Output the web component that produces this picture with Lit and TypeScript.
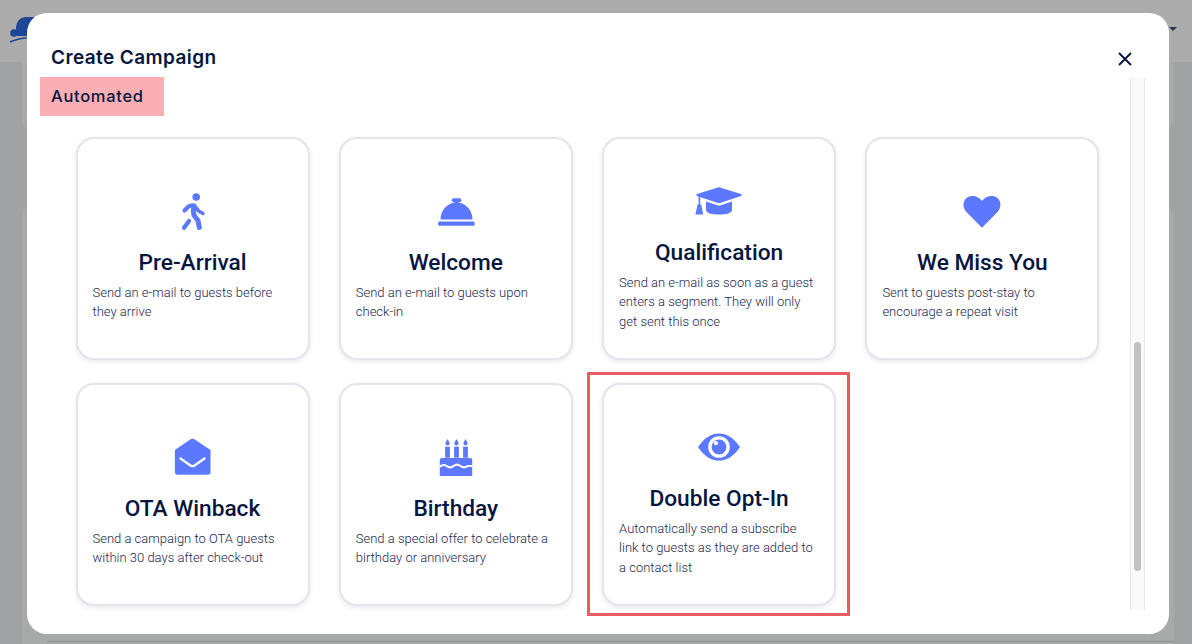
import { html, svg, LitElement, css } from "lit";
import { customElement } from "lit/decorators.js";

const ICON = "#5b78ff";

const walk = svg`<svg viewBox="2.5 -3 80 70" width="80" height="70">
  <circle cx="45.7" cy="16" r="3.8" fill="${ICON}"/>
  <g fill="none" stroke="${ICON}" stroke-linecap="round" stroke-linejoin="round">
    <path d="M34 29.5L38 25.5Q40 24 44 24.5" stroke-width="4.2"/>
    <path d="M43.5 26Q42 31 44 35L47.5 39.5L48.8 46.5" stroke-width="5"/>
    <path d="M46 27L48 30L52.5 32.5" stroke-width="3.6"/>
    <path d="M38.5 40L33.5 46.8" stroke-width="4.2"/>
  </g>
</svg>`;

const bell = svg`<svg viewBox="-4.5 -3 80 70" width="80" height="70" fill="${ICON}">
  <rect x="31.3" y="17.3" width="9.6" height="4" rx="2"/>
  <rect x="34" y="20" width="4" height="3"/>
  <path d="M20 38.6C20 29 27 21.5 36 21.5S52 29 52 38.6Z"/>
  <rect x="17.7" y="40.4" width="36.4" height="4.4" rx="1"/>
</svg>`;

const hat = svg`<svg viewBox="-1 -7 80 70" width="80" height="70" fill="${ICON}">
  <path d="M38 12.4Q39 12.2 40 12.4L61 19Q62.5 20 61 21L40 27.9Q39 28.1 38 27.9L17 21Q15.5 20 17 19Z"/>
  <path d="M26 26.6L38 30.6Q39 30.9 40 30.6L52 26.6V35C52 38 46 39.6 39 39.6C32 39.6 26 38 26 35Z"/>
  <rect x="18.6" y="21" width="1.6" height="9"/>
  <path d="M17.6 29.5H21.2L23.2 39.5H15.4Z"/>
</svg>`;

const heart = svg`<svg viewBox="-2.5 -3 80 70" width="80" height="70" fill="${ICON}">
  <path d="M37.5 46.8L22 31C16.5 25 19 15 28 15C32 15 35.5 17 37.5 20C39.5 17 43 15 47 15C56 15 58.5 25 53 31Z"/>
</svg>`;

const mail = svg`<svg viewBox="2.5 -0.5 80 70" width="80" height="70">
  <path fill="${ICON}" d="M40.5 14.6Q42 13.8 43.5 14.6L60 25.5V47.5A2.8 2.8 0 0 1 57.2 50.3H27.2A2.8 2.8 0 0 1 24.4 47.5V25.5Z"/>
  <path fill="none" stroke="#fff" stroke-width="2.3" stroke-linecap="round" stroke-linejoin="round" d="M30 34L40 41Q42 42.4 44 41L54 34"/>
</svg>`;

const cake = svg`<svg viewBox="0.5 -1 80 70" width="80" height="70" fill="${ICON}">
  <path d="M32 14L34.2 18Q34.2 20.4 32 20.4T29.8 18Z"/>
  <path d="M41 14L43.2 18Q43.2 20.4 41 20.4T38.8 18Z"/>
  <path d="M50 14L52.2 18Q52.2 20.4 50 20.4T47.8 18Z"/>
  <rect x="29.6" y="21.7" width="4.8" height="11"/>
  <rect x="38.6" y="21.7" width="4.8" height="11"/>
  <rect x="47.6" y="21.7" width="4.8" height="11"/>
  <path d="M26.5 33H54.5Q56.7 33 56.7 35V51H24.3V35Q24.3 33 26.5 33Z"/>
  <path fill="none" stroke="#fff" stroke-width="2" d="M24 42C26.5 39.5 29 39.5 31 41S35.5 43 38 41S43 39.5 45 41S49.5 43 52 41T57 41"/>
</svg>`;

const eye = svg`<svg viewBox="-1 -6 80 70" width="80" height="70">
  <path fill="${ICON}" d="M18 27C24 18 31 13.4 39 13.4S54 18 60 27C54 36 47 40.6 39 40.6S24 36 18 27Z"/>
  <circle cx="39" cy="27" r="10.8" fill="#fff"/>
  <circle cx="39" cy="27" r="7.4" fill="${ICON}"/>
  <circle cx="36" cy="23.2" r="2.1" fill="#fff"/>
</svg>`;

const campaigns = [
  { icon: walk, name: "Pre-Arrival", text: "Send an e-mail to guests before they arrive" },
  { icon: bell, name: "Welcome", text: "Send an e-mail to guests upon check-in" },
  { icon: hat, name: "Qualification", text: "Send an e-mail as soon as a guest enters a segment. They will only get sent this once" },
  { icon: heart, name: "We Miss You", text: "Sent to guests post-stay to encourage a repeat visit" },
  { icon: mail, name: "OTA Winback", text: "Send a campaign to OTA guests within 30 days after check-out" },
  { icon: cake, name: "Birthday", text: "Send a special offer to celebrate a birthday or anniversary" },
  { icon: eye, name: "Double Opt-In", text: "Automatically send a subscribe link to guests as they are added to a contact list", marked: true },
];

@customElement("app-root")
export class AppRoot extends LitElement {
  static styles = css`
    :host {
      display: block;
      position: relative;
      width: 1192px;
      height: 644px;
      overflow: hidden;
      background: #a1a2a3;
      font-family: Roboto, "Liberation Sans", sans-serif;
      color: #06163f;
    }

    /* page behind the dimmed backdrop */
    .topbar {
      height: 62px;
      display: flex;
      align-items: center;
      justify-content: space-between;
      padding: 0 15px 0 10px;
      background: #abacab;
    }
    .logo {
      display: block;
    }
    .caret {
      width: 0;
      height: 0;
      margin-top: -4px;
      border-left: 4px solid transparent;
      border-right: 4px solid transparent;
      border-top: 4px solid #2a3350;
    }
    .page {
      padding: 0 18px 0 22px;
    }
    .panel {
      height: 70px;
      background: #a8a9a9;
      border-radius: 0 0 12px 12px;
    }
    .panel.tall {
      height: 439px;
      box-sizing: border-box;
      margin-top: 73px;
      padding: 436px 0 0 25px;
      border-radius: 12px 12px 0 0;
    }
    .page-line {
      height: 1px;
      background: #8d8e90;
    }

    .modal {
      position: absolute;
      left: 27px;
      top: 13px;
      width: 1142px;
      height: 621px;
      box-sizing: border-box;
      display: flex;
      flex-direction: column;
      background: #fff;
      border-radius: 20px;
    }
    .modal-head {
      height: 64px;
      flex: none;
      display: flex;
      align-items: center;
      justify-content: space-between;
      padding: 24px 37px 0 24px;
      box-sizing: border-box;
    }
    h2 {
      margin: 0;
      font: 600 19px Inter, "Open Sans", sans-serif;
      letter-spacing: 0.4px;
      color: #06163f;
    }
    .close {
      display: block;
      margin-top: 4px;
    }
    .modal-body {
      display: flex;
      height: 533px;
      padding-left: 13px;
    }
    .content {
      width: 1090px;
      flex: none;
    }
    .tag {
      width: 124px;
      height: 39px;
      box-sizing: border-box;
      padding: 0 0 2px 11px;
      display: flex;
      align-items: center;
      background: #fbafb4;
      font: 500 16.5px Inter, "Open Sans", sans-serif;
      letter-spacing: 0.7px;
      color: #06163f;
    }
    .grid {
      display: grid;
      grid-template-columns: repeat(4, 234px);
      column-gap: 29.3px;
      row-gap: 23.5px;
      padding: 21px 0 0 35.5px;
    }
    .card {
      position: relative;
      height: 222.5px;
      box-sizing: border-box;
      display: flex;
      flex-direction: column;
      justify-content: center;
      padding: 3px 16px 0;
      border: 2px solid #e4e5ec;
      border-radius: 18px;
      background: #fff;
      box-shadow: 0 2px 5px rgba(40, 45, 80, 0.1);
    }
    .card svg {
      display: block;
      margin: 0 auto;
    }
    .card h3 {
      margin: 2px 0 0;
      font: 500 22.7px/26px Roboto, sans-serif;
      text-align: center;
      color: #06163f;
    }
    .card p {
      margin: 6.5px 1px 0 -1px;
      font: 300 13px/19.5px Roboto, sans-serif;
      color: #1a2750;
    }
    .mark {
      position: absolute;
      left: -17.3px;
      right: -16px;
      top: -13px;
      bottom: -12.5px;
      border: 3px solid #ee5a64;
    }
    .track {
      width: 15px;
      flex: none;
      box-sizing: border-box;
      padding: 265px 3px 0 3px;
      background: #f9f9f9;
      border-left: 1px solid #e8e8e8;
      border-right: 1px solid #e8e8e8;
    }
    .thumb {
      height: 229px;
      border-radius: 4px;
      background: #c1c1c1;
    }
  `;

  render() {
    return html`
      <div class="topbar">
        <svg class="logo" width="24" height="28" viewBox="0 0 24 28">
          <circle cx="4" cy="16" r="3.8" fill="#1b4796"/>
          <path fill="#1b4796" d="M6 19V10Q7 1 15 0H24V19Z"/>
          <path fill="none" stroke="#1b4796" stroke-width="1.6" d="M0 25Q8 21 24 20"/>
        </svg>
        <div class="caret"></div>
      </div>
      <div class="page">
        <div class="panel"></div>
        <div class="panel tall"><div class="page-line"></div></div>
      </div>
      <div class="modal">
        <div class="modal-head">
          <h2>Create Campaign</h2>
          <svg class="close" width="14" height="14" viewBox="0 0 14 14">
            <path d="M1 1L13 13M13 1L1 13" stroke="#06163f" stroke-width="1.9" fill="none"/>
          </svg>
        </div>
        <div class="modal-body">
          <div class="content">
            <div class="tag">Automated</div>
            <div class="grid">
              ${campaigns.map(
                (c) => html`
                  <div class="card">
                    ${c.icon}
                    <h3>${c.name}</h3>
                    <p>${c.text}</p>
                    ${c.marked ? html`<div class="mark"></div>` : ""}
                  </div>
                `
              )}
            </div>
          </div>
          <div class="track"><div class="thumb"></div></div>
        </div>
      </div>
    `;
  }
}
